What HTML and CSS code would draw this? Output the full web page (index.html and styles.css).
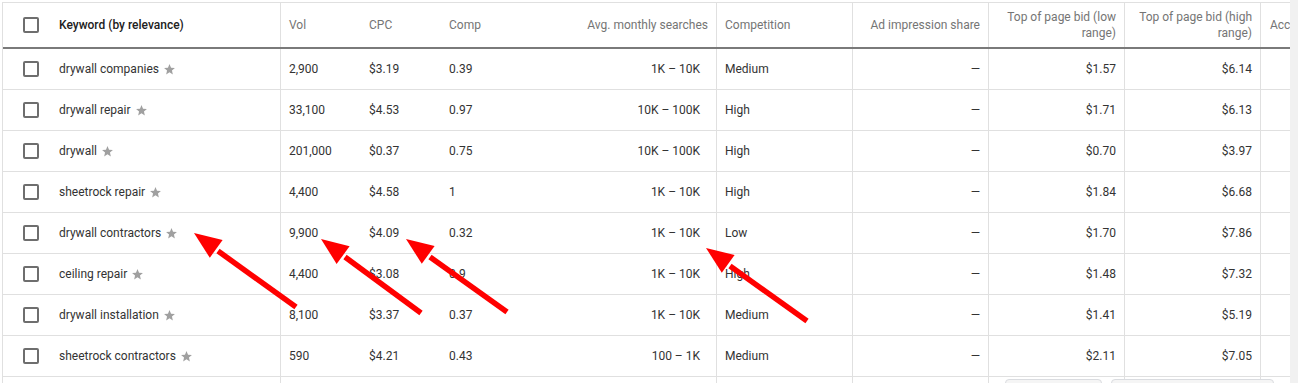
FILE: index.html
```html
<!DOCTYPE html>
<html>
<head>
<meta charset="utf-8">
<link rel="stylesheet" href="styles.css">
</head>
<body>
<div class="page">
  <div class="viewport">
    <div class="table">
      <div class="row head">
        <div class="cell kw"><span class="cb"></span><span class="kw-title">Keyword (by relevance)</span></div>
        <div class="cell">Vol</div>
        <div class="cell">CPC</div>
        <div class="cell">Comp</div>
        <div class="cell right bl">Avg. monthly searches</div>
        <div class="cell bl">Competition</div>
        <div class="cell right bl">Ad impression share</div>
        <div class="cell right bl two">Top of page bid (low range)</div>
        <div class="cell right bl two">Top of page bid (high range)</div>
        <div class="cell acc">Acc</div>
      </div>

      <div class="row">
        <div class="cell kw"><span class="cb"></span><span>drywall companies</span><svg class="star" viewBox="0 0 24 24"><path d="M12 17.27L18.18 21l-1.64-7.03L22 9.24l-7.19-.61L12 2 9.19 8.63 2 9.24l5.46 4.73L5.820 21z"/></svg></div>
        <div class="cell">2,900</div><div class="cell">$3.19</div><div class="cell">0.39</div>
        <div class="cell right bl avg">1K – 10K</div><div class="cell bl">Medium</div>
        <div class="cell right bl">—</div><div class="cell right bl">$1.57</div><div class="cell right bl">$6.14</div><div class="cell"></div>
      </div>
      <div class="row">
        <div class="cell kw"><span class="cb"></span><span>drywall repair</span><svg class="star" viewBox="0 0 24 24"><path d="M12 17.27L18.18 21l-1.64-7.03L22 9.24l-7.19-.61L12 2 9.19 8.63 2 9.24l5.46 4.73L5.82 21z"/></svg></div>
        <div class="cell">33,100</div><div class="cell">$4.53</div><div class="cell">0.97</div>
        <div class="cell right bl avg">10K – 100K</div><div class="cell bl">High</div>
        <div class="cell right bl">—</div><div class="cell right bl">$1.71</div><div class="cell right bl">$6.13</div><div class="cell"></div>
      </div>
      <div class="row">
        <div class="cell kw"><span class="cb"></span><span>drywall</span><svg class="star" viewBox="0 0 24 24"><path d="M12 17.27L18.18 21l-1.64-7.03L22 9.24l-7.19-.61L12 2 9.19 8.63 2 9.24l5.46 4.73L5.82 21z"/></svg></div>
        <div class="cell">201,000</div><div class="cell">$0.37</div><div class="cell">0.75</div>
        <div class="cell right bl avg">10K – 100K</div><div class="cell bl">High</div>
        <div class="cell right bl">—</div><div class="cell right bl">$0.70</div><div class="cell right bl">$3.97</div><div class="cell"></div>
      </div>
      <div class="row">
        <div class="cell kw"><span class="cb"></span><span>sheetrock repair</span><svg class="star" viewBox="0 0 24 24"><path d="M12 17.27L18.18 21l-1.64-7.03L22 9.24l-7.19-.61L12 2 9.19 8.63 2 9.24l5.46 4.73L5.82 21z"/></svg></div>
        <div class="cell">4,400</div><div class="cell">$4.58</div><div class="cell">1</div>
        <div class="cell right bl avg">1K – 10K</div><div class="cell bl">High</div>
        <div class="cell right bl">—</div><div class="cell right bl">$1.84</div><div class="cell right bl">$6.68</div><div class="cell"></div>
      </div>
      <div class="row">
        <div class="cell kw"><span class="cb"></span><span>drywall contractors</span><svg class="star" viewBox="0 0 24 24"><path d="M12 17.27L18.18 21l-1.64-7.03L22 9.24l-7.19-.61L12 2 9.19 8.63 2 9.24l5.46 4.73L5.82 21z"/></svg></div>
        <div class="cell">9,900</div><div class="cell">$4.09</div><div class="cell">0.32</div>
        <div class="cell right bl avg">1K – 10K</div><div class="cell bl">Low</div>
        <div class="cell right bl">—</div><div class="cell right bl">$1.70</div><div class="cell right bl">$7.86</div><div class="cell"></div>
      </div>
      <div class="row">
        <div class="cell kw"><span class="cb"></span><span>ceiling repair</span><svg class="star" viewBox="0 0 24 24"><path d="M12 17.27L18.18 21l-1.64-7.03L22 9.24l-7.19-.61L12 2 9.19 8.63 2 9.24l5.46 4.73L5.82 21z"/></svg></div>
        <div class="cell">4,400</div><div class="cell">$3.08</div><div class="cell">0.9</div>
        <div class="cell right bl avg">1K – 10K</div><div class="cell bl">High</div>
        <div class="cell right bl">—</div><div class="cell right bl">$1.48</div><div class="cell right bl">$7.32</div><div class="cell"></div>
      </div>
      <div class="row">
        <div class="cell kw"><span class="cb"></span><span>drywall installation</span><svg class="star" viewBox="0 0 24 24"><path d="M12 17.27L18.18 21l-1.64-7.03L22 9.24l-7.19-.61L12 2 9.19 8.63 2 9.24l5.46 4.73L5.82 21z"/></svg></div>
        <div class="cell">8,100</div><div class="cell">$3.37</div><div class="cell">0.37</div>
        <div class="cell right bl avg">1K – 10K</div><div class="cell bl">Medium</div>
        <div class="cell right bl">—</div><div class="cell right bl">$1.41</div><div class="cell right bl">$5.19</div><div class="cell"></div>
      </div>
      <div class="row">
        <div class="cell kw"><span class="cb"></span><span>sheetrock contractors</span><svg class="star" viewBox="0 0 24 24"><path d="M12 17.27L18.18 21l-1.64-7.03L22 9.24l-7.19-.61L12 2 9.19 8.63 2 9.24l5.46 4.73L5.82 21z"/></svg></div>
        <div class="cell">590</div><div class="cell">$4.21</div><div class="cell">0.43</div>
        <div class="cell right bl avg">100 – 1K</div><div class="cell bl">Medium</div>
        <div class="cell right bl">—</div><div class="cell right bl">$2.11</div><div class="cell right bl">$7.05</div><div class="cell"></div>
      </div>
      <div class="row foot">
        <div class="cell kw"></div>
        <div class="cell"></div><div class="cell"></div><div class="cell"></div>
        <div class="cell bl"></div><div class="cell bl"></div>
        <div class="cell bl"></div><div class="cell bl"></div><div class="cell bl"></div><div class="cell"></div>
      </div>
    </div>
    <div class="float-btns">
      <span class="btn btn-a"></span>
      <span class="btn btn-b"></span>
    </div>
  </div>
  <div class="scrollbar"></div>
  <svg class="arrows" viewBox="0 0 1298 383" width="1298" height="383">
    <g stroke="#ff0000" stroke-width="5.5" fill="#ff0000">
      <line x1="296" y1="307" x2="218" y2="251"/>
      <polygon stroke="none" points="194,233 222.6,240 209.8,257.8"/>
      <line x1="421" y1="313" x2="345" y2="257"/>
      <polygon stroke="none" points="321,239 349.6,246.3 336.6,264"/>
      <line x1="507" y1="312" x2="430" y2="257"/>
      <polygon stroke="none" points="406,239 434.6,246 421.8,263.8"/>
      <line x1="807" y1="321" x2="730" y2="266"/>
      <polygon stroke="none" points="706,248 734.6,255 721.8,272.8"/>
    </g>
  </svg>
</div>
</body>
</html>
```

FILE: styles.css
```css
* { box-sizing: border-box; }
html, body { margin: 0; padding: 0; background: #fff; }
body {
  font-family: Roboto, "Liberation Sans", Arial, sans-serif;
  font-size: 12px;
  color: #333;
  overflow: hidden;
  width: 1298px;
  height: 383px;
}
.page {
  position: relative;
  display: flex;
  width: 1298px;
  height: 383px;
  padding: 2px 0 0 2px;
}
.viewport {
  position: relative;
  width: 1288px;
  height: 381px;
  overflow: hidden;
  border-left: 1px solid #e0e0e0;
  border-top: 1px solid #e0e0e0;
}
.scrollbar {
  width: 8px;
  margin-top: -2px;
  height: 383px;
  background: #f1f1f1;
}
.table { width: 1378px; }
.row {
  display: grid;
  grid-template-columns: 278px 80px 80px 80px 196px 136px 136px 136px 136px 120px;
  height: 41px;
  border-bottom: 1px solid #e0e0e0;
}
.row.head {
  height: 46px;
  border-bottom: 2px solid #7a7a7a;
  color: #757575;
}
.row.foot { height: 40px; border-bottom: none; }
.cell {
  display: flex;
  align-items: center;
  padding: 0 8px;
  white-space: nowrap;
  overflow: hidden;
}
.cell.kw { border-right: 1px solid #e0e0e0; padding-left: 20px; }
.cell.bl { border-right: 1px solid #e0e0e0; }
.row .cell:nth-child(5) { border-right: 1px solid #e0e0e0; }
.cell.right { justify-content: flex-end; text-align: right; }
.cell.avg { padding-right: 16px; }
.cell.two {
  white-space: normal;
  line-height: 16px;
  padding-left: 14px;
}
.cell.acc { padding-left: 9px; }
.cb {
  width: 16px;
  height: 16px;
  border: 2px solid #6e6e6e;
  border-radius: 2px;
  margin-right: 20px;
  flex: none;
}
.kw-title { font-weight: 500; color: #212121; }
.star {
  width: 13px;
  height: 13px;
  margin-left: 4px;
  margin-top: 1px;
  fill: #a0a0a0;
  flex: none;
}
.float-btns {
  position: absolute;
  top: 376px;
  left: 1002px;
  display: flex;
  gap: 9px;
}
.btn {
  display: block;
  height: 24px;
  background: #f5f5f5;
  border: 1px solid #dadce0;
  border-radius: 4px;
}
.btn-a { width: 97px; }
.btn-b { width: 163px; }
.arrows {
  position: absolute;
  left: 0;
  top: 0;
  pointer-events: none;
}
```
